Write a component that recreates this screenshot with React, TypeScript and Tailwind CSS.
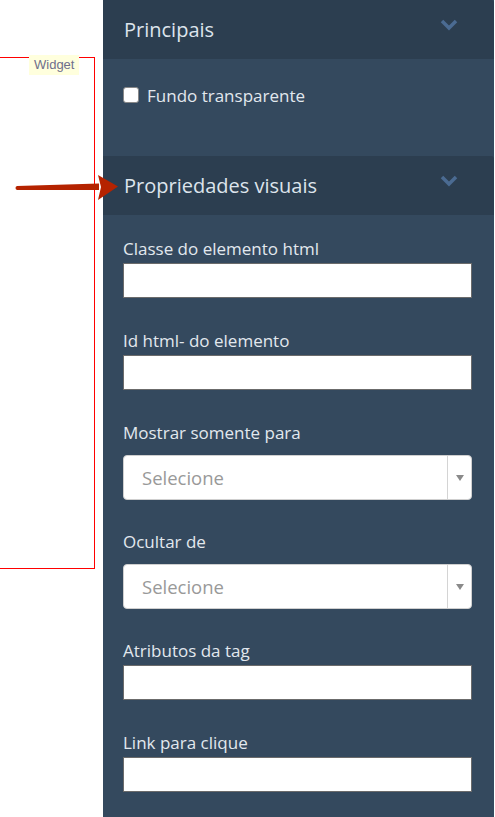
import React from "react"

const font = { fontFamily: '"Open Sans", Lato, sans-serif' }

function Chevron() {
  return (
    <svg width="18" height="12" viewBox="0 0 18 12" className="mr-[36px]">
      <path d="M2 2 L9 9 L16 2" fill="none" stroke="#4b6b92" strokeWidth="3.5" />
    </svg>
  )
}

function Header({ title }: { title: string }) {
  return (
    <div className="flex h-[59px] items-center justify-between rounded-tr-[3px] bg-[#2c3e50] pl-[21px]">
      <span className="text-[20px] text-[#dde4ec]">{title}</span>
      <div className="-mt-[9px]">
        <Chevron />
      </div>
    </div>
  )
}

function TextField({ label }: { label: string }) {
  return (
    <div className="mb-[33px]">
      <div className="h-[20px] text-[17px] leading-[20px] text-[#e2e8ee]">{label}</div>
      <div className="mt-[4px] h-[35px] w-[349px] border border-[#6b6b6b] bg-white" />
    </div>
  )
}

function SelectField({ label }: { label: string }) {
  return (
    <div className="mb-[32px]">
      <div className="h-[20px] text-[17px] leading-[20px] text-[#e2e8ee]">{label}</div>
      <div className="mt-[12px] flex h-[45px] w-[349px] items-center rounded-[4px] border border-[#cfcfcf] bg-white">
        <span className="flex-1 pl-[18px] text-[18.5px] text-[#999999]">Selecione</span>
        <div className="flex h-full w-[24px] items-center justify-center border-l border-[#d4d4d4]">
          <svg width="8" height="6" viewBox="0 0 8 6">
            <path d="M0 0 L8 0 L4 6 Z" fill="#8a8a8a" />
          </svg>
        </div>
      </div>
    </div>
  )
}

export default function App() {
  return (
    <div className="relative flex h-[817px] w-[495px] overflow-hidden bg-white" style={font}>
      {/* canvas side */}
      <div className="w-[103px] shrink-0">
        <div className="relative -ml-[10px] mt-[57px] h-[512px] w-[105px] border border-[#ff0000]">
          <span
            className="absolute -top-[3px] left-[38px] bg-[#ffffdd] px-[5px] text-[13px] leading-[20px] text-[#6f6f8c]"
            style={{ fontFamily: '"Liberation Sans", Arial, sans-serif' }}
          >
            Widget
          </span>
        </div>
      </div>

      {/* properties panel */}
      <div className="h-full w-[391px] shrink-0 bg-[#34495e]">
        <Header title="Principais" />
        <div className="flex h-[97px] items-start pl-[20px] pt-[27px]">
          <span className="mt-px h-[16px] w-[16px] rounded-[3px] border border-[#888888] bg-white" />
          <span className="ml-[8px] text-[17px] leading-[20px] text-[#e2e8ee]">Fundo transparente</span>
        </div>
        <Header title="Propriedades visuais" />
        <div className="pl-[20px] pt-[24px]">
          <TextField label="Classe do elemento html" />
          <TextField label="Id html- do elemento" />
          <SelectField label="Mostrar somente para" />
          <SelectField label="Ocultar de" />
          <TextField label="Atributos da tag" />
          <TextField label="Link para clique" />
        </div>
      </div>

      {/* pointer arrow */}
      <svg className="absolute left-0 top-[170px]" width="125" height="35" viewBox="0 0 125 35">
        <path d="M17 16 L99 13.5 L99 20 L17 20 Z" fill="#b52300" />
        <path d="M98 5 L118 16.5 L98 30 L101 17 Z" fill="#b52300" />
        <circle cx="17.5" cy="18" r="2" fill="#b52300" />
      </svg>
    </div>
  )
}
